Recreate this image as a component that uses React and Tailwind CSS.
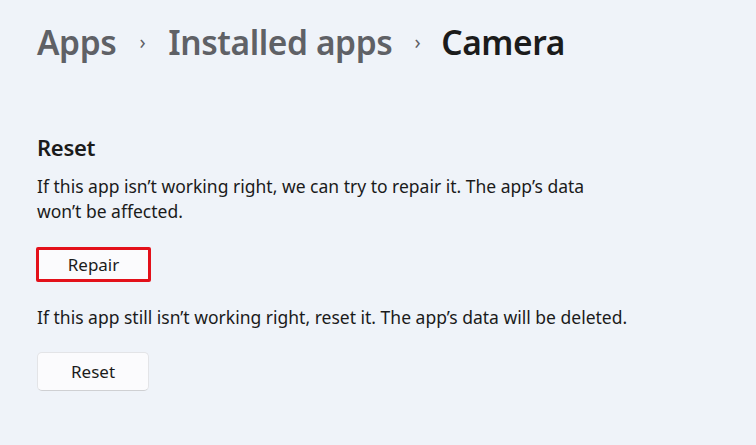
export default function App() {
  return (
    <div className="w-[756px] h-[445px] bg-[#eff3f9] overflow-hidden text-[#1b1b1b]" style={{ fontFamily: '"Noto Sans", "Open Sans", sans-serif' }}>
      <div className="pl-[37px] pt-[20px] flex items-center leading-[44px] text-[33.5px] font-semibold tracking-[-0.4px]">
        <span className="text-[#5f6166]">Apps</span>
        <span className="text-[#5f6166] text-[20px] mx-[23px] font-normal">›</span>
        <span className="text-[#5f6166]">Installed apps</span>
        <span className="text-[#5f6166] text-[20px] ml-[22px] mr-[21px] font-normal">›</span>
        <span className="text-[#1b1b1b]">Camera</span>
      </div>
      <div className="pl-[37px] pt-[68px]">
        <div className="text-[22px] font-semibold leading-[30px] tracking-[-0.3px]">Reset</div>
        <p className="mt-[12px] w-[560px] text-[17.5px] leading-[25px]">
          If this app isn’t working right, we can try to repair it. The app’s data won’t be affected.
        </p>
        <div className="mt-[23px] w-[115px] h-[35px] border-[3px] border-[#e3101a] rounded-[2px] bg-[#fbfbfd] flex items-center justify-center text-[17px] -ml-[1px]">
          Repair
        </div>
        <p className="mt-[23px] text-[17.5px] leading-[25px]">
          If this app still isn’t working right, reset it. The app’s data will be deleted.
        </p>
        <div className="mt-[22px] w-[112px] h-[39px] border border-[#e3e4e7] border-b-[#cfd0d3] rounded-[5px] bg-[#fbfbfd] flex items-center justify-center text-[17px]">
          Reset
        </div>
      </div>
    </div>
  );
}
